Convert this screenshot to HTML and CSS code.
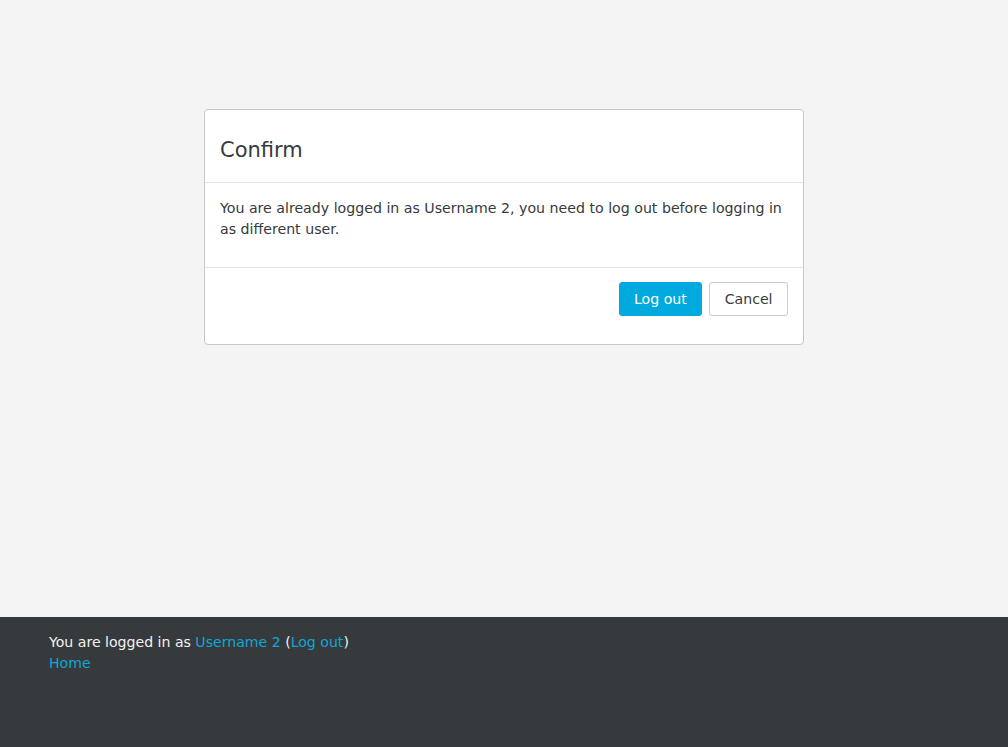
FILE: index.html
```html
<!DOCTYPE html>
<html lang="en">
<head>
<meta charset="utf-8">
<title>Confirm</title>
<link rel="stylesheet" href="styles.css">
</head>
<body>
<div class="page">
  <main class="main">
    <div class="card" role="dialog" aria-labelledby="confirm-title">
      <div class="card-header">
        <h2 class="card-title" id="confirm-title">Confirm</h2>
      </div>
      <div class="card-body">
        <p class="message">You are already logged in as Username 2, you need to log out before logging in as different user.</p>
      </div>
      <div class="card-footer">
        <button class="btn btn-primary" type="button">Log out</button>
        <button class="btn btn-secondary" type="button">Cancel</button>
      </div>
    </div>
  </main>
  <footer class="site-footer">
    <div class="login-info">You are logged in as <a href="#">Username 2</a> (<a href="#">Log out</a>)</div>
    <div><a href="#">Home</a></div>
  </footer>
</div>
</body>
</html>
```
FILE: styles.css
```css
html, body {
  margin: 0;
  padding: 0;
}
body {
  font-family: "DejaVu Sans", "Liberation Sans", sans-serif;
  font-size: 14.1px;
  line-height: 21px;
  color: #373a3c;
  background: #f4f4f4;
}
.page {
  display: flex;
  flex-direction: column;
  min-height: 747px;
}
.main {
  flex: 1;
  display: flex;
  justify-content: center;
  align-items: flex-start;
  padding-top: 109px;
  height: 508px;
}
.card {
  width: 598px;
  background: #fff;
  border: 1px solid #c8c8c8;
  border-radius: 4px;
}
.card-header {
  padding: 28px 15px 19px;
  border-bottom: 1px solid #e3e3e3;
}
.card-title {
  margin: 0;
  font-size: 21px;
  line-height: 25px;
  font-weight: normal;
  color: #373a3c;
}
.card-body {
  padding: 15px 15px 15px;
}
.message {
  margin: 0 0 12px;
  font-size: 14.16px;
}
.card-footer {
  border-top: 1px solid #e3e3e3;
  padding: 14px 15px 28px;
  display: flex;
  justify-content: flex-end;
  gap: 7px;
}
.btn {
  font-family: inherit;
  font-size: 14.1px;
  line-height: 21px;
  height: 34px;
  padding: 0 14.5px;
  border-radius: 3px;
  border: 1px solid transparent;
  cursor: pointer;
}
.btn-primary {
  background: #00aadf;
  border-color: #00aadf;
  color: #fff;
}
.btn-secondary {
  background: #fff;
  border-color: #cccccc;
  color: #373a3c;
}
.site-footer {
  background: #373a3c;
  color: #f2f2f2;
  height: 130px;
  box-sizing: border-box;
  padding: 15px 49px;
}
.site-footer a {
  color: #0ea7d8;
  text-decoration: none;
}
```
